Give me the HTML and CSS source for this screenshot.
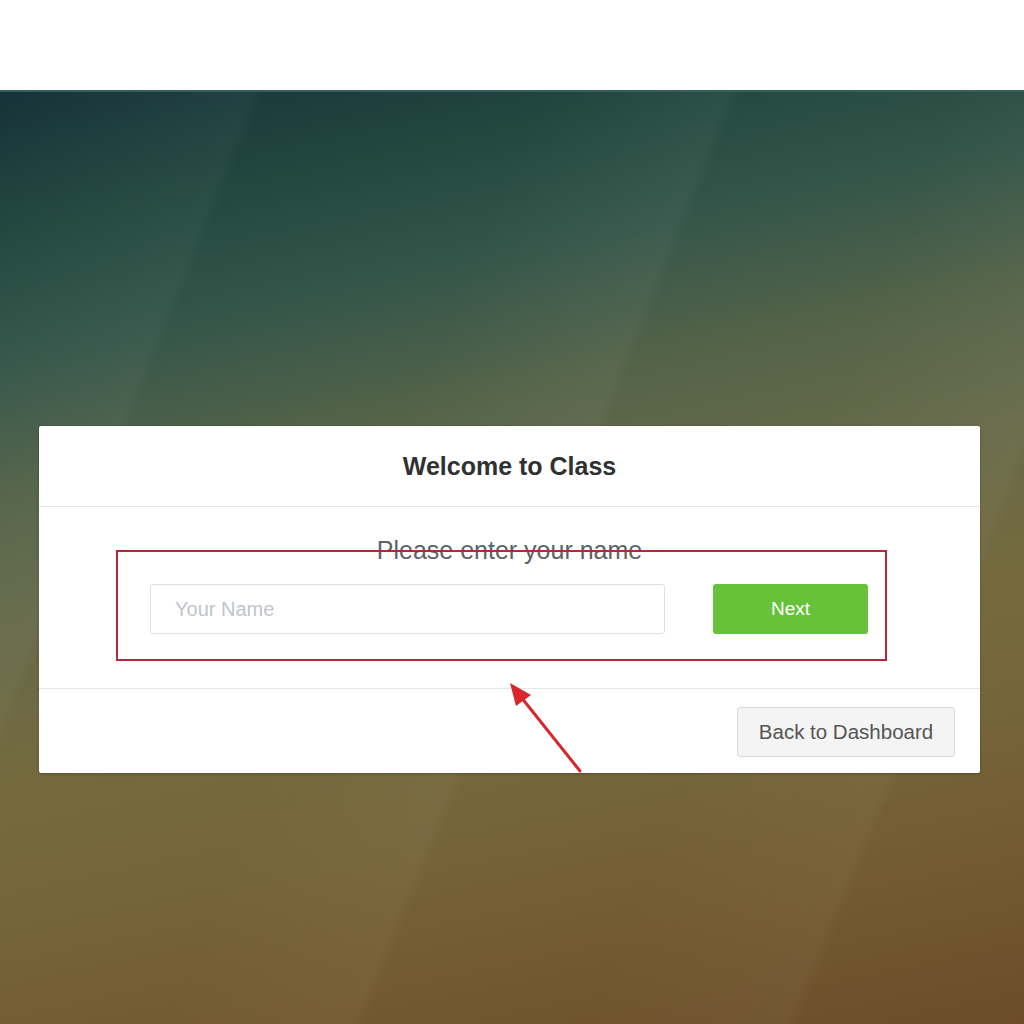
FILE: index.html
```html
<!DOCTYPE html>
<html lang="en">
<head>
<meta charset="utf-8">
<title>Welcome to Class</title>
<link rel="stylesheet" href="styles.css">
</head>
<body>
<div class="topbar"></div>
<main class="stage">
  <section class="card">
    <header class="card-head">
      <h1 class="title">Welcome to Class</h1>
    </header>
    <div class="card-body">
      <p class="prompt">Please enter your name</p>
      <form class="row">
        <input class="name-input" type="text" placeholder="Your Name">
        <button class="btn-next" type="button">Next</button>
      </form>
    </div>
    <footer class="card-foot">
      <button class="btn-back" type="button">Back to Dashboard</button>
    </footer>
  </section>
  <div class="annot-box"></div>
  <svg class="annot-arrow" width="1024" height="1024" viewBox="0 0 1024 1024">
    <line x1="580" y1="771" x2="521" y2="697" stroke="#d9262c" stroke-width="3" stroke-linecap="round"/>
    <polygon points="510,683 531,695 516,706" fill="#d9262c"/>
  </svg>
</main>
</body>
</html>
```
FILE: styles.css
```css
html, body {
  margin: 0;
  padding: 0;
}
body {
  font-family: "Liberation Sans", Arial, sans-serif;
  background: #ffffff;
  width: 1024px;
  height: 1024px;
  overflow: hidden;
}
.topbar {
  height: 92px;
  background: #ffffff;
  border-bottom: 2px solid #35605e;
  box-sizing: border-box;
}
.stage {
  height: 932px;
  padding: 334px 44px 0 39px;
  box-sizing: border-box;
  background:
    linear-gradient(112deg, rgba(255,255,255,0) 0%, rgba(255,255,255,0.03) 18%, rgba(255,255,255,0) 19%, rgba(255,255,255,0) 38%, rgba(255,255,255,0.035) 52%, rgba(255,255,255,0) 53%, rgba(255,255,255,0) 68%, rgba(255,255,255,0.035) 83%, rgba(255,255,255,0) 84%),
    linear-gradient(168deg, #163239 0%, #244a40 14%, #36564a 24%, #556448 36%, #65694a 46%, #746a3e 60%, #76653a 72%, #735a30 85%, #6c4c2a 100%);
}
.card {
  width: 941px;
  background: #ffffff;
  border-radius: 2px;
  box-shadow: 0 1px 3px rgba(0,0,0,0.25);
}
.card-head {
  height: 80px;
  display: flex;
  align-items: center;
  justify-content: center;
  border-bottom: 1px solid #e6e6e6;
}
.title {
  margin: 0;
  font-size: 25px;
  font-weight: bold;
  color: #303133;
}
.card-body {
  padding: 29px 0 54px;
  border-bottom: 1px solid #e6e6e6;
}
.prompt {
  margin: 0 0 20px;
  text-align: center;
  font-size: 25px;
  line-height: 28px;
  color: #606266;
}
.row {
  display: flex;
  gap: 48px;
  padding-left: 111px;
  margin: 0;
}
.name-input {
  width: 515px;
  height: 50px;
  box-sizing: border-box;
  border: 1px solid #e0e0e0;
  border-radius: 3px;
  padding: 0 24px;
  font-family: "Liberation Sans", Arial, sans-serif;
  font-size: 20px;
  color: #333;
  background: #fff;
}
.name-input::placeholder {
  color: #c0c4cc;
}
.btn-next {
  width: 155px;
  height: 50px;
  border: none;
  border-radius: 3px;
  background: #67c23a;
  color: #ffffff;
  font-family: "Liberation Sans", Arial, sans-serif;
  font-size: 19px;
}
.card-foot {
  display: flex;
  justify-content: flex-end;
  padding: 18px 25px 16px;
}
.btn-back {
  width: 218px;
  height: 50px;
  border: 1px solid #dcdcdc;
  border-radius: 3px;
  background: #f4f4f4;
  color: #555555;
  font-family: "Liberation Sans", Arial, sans-serif;
  font-size: 20.5px;
}
.annot-box {
  position: absolute;
  left: 116px;
  top: 550px;
  width: 771px;
  height: 111px;
  box-sizing: border-box;
  border: 2px solid #b3283c;
}
.annot-arrow {
  position: absolute;
  left: 0;
  top: 0;
  pointer-events: none;
}
```
